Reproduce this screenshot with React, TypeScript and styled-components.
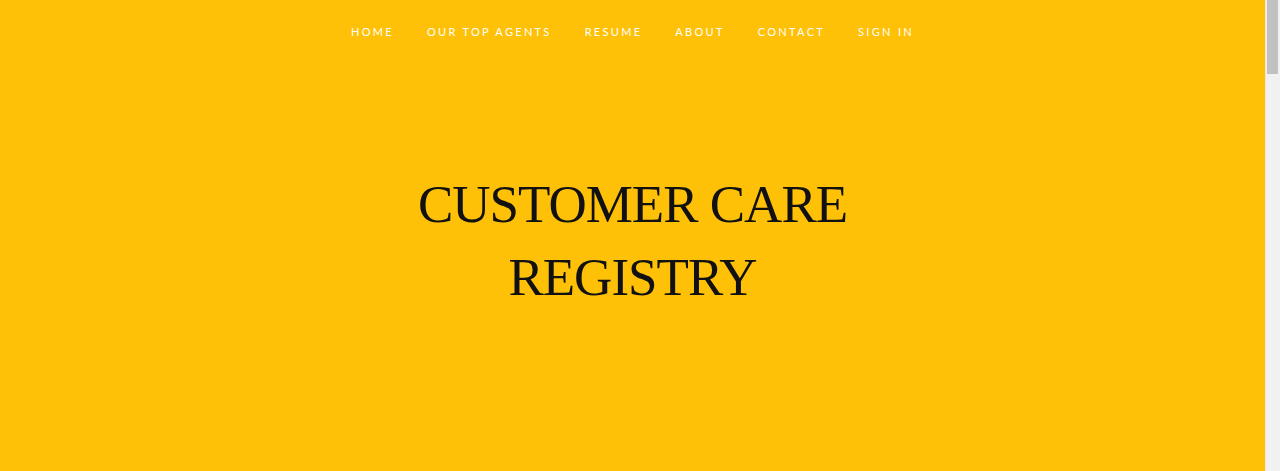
import React from "react";
import styled, { createGlobalStyle } from "styled-components";

const Global = createGlobalStyle`
  html, body { margin: 0; padding: 0; }
  body { background: #ffc107; overflow: hidden; }
`;

const Frame = styled.div`
  display: flex;
  height: 100vh;
`;

const Page = styled.div`
  flex: 1;
  background: #ffc107;
  display: flex;
  flex-direction: column;
  align-items: center;
`;

const Scrollbar = styled.div`
  width: 14px;
  background: #f1f1f1;
  border-left: 1px solid #e8e8e8;
  display: flex;
  flex-direction: column;
`;

const Thumb = styled.div`
  height: 74px;
  margin: 0 2px 0 1px;
  background: #c1c1c1;
`;

const Nav = styled.nav`
  display: flex;
  justify-content: center;
  gap: 33px;
  padding-top: 24px;
`;

const NavLink = styled.a`
  font-family: Lato, "Open Sans", sans-serif;
  font-size: 11px;
  letter-spacing: 2.3px;
  color: #ffffff;
  text-decoration: none;
  text-transform: uppercase;
  line-height: 16px;
`;

const Hero = styled.h1`
  margin: 128px 0 0;
  font-family: "Liberation Serif", "DejaVu Serif", serif;
  font-weight: 400;
  font-size: 53px;
  letter-spacing: -1px;
  line-height: 73px;
  color: #111;
  text-align: center;
  width: 460px;
`;

const links = ["Home", "Our Top Agents", "Resume", "About", "Contact", "Sign In"];

export default function App() {
  return (
    <>
      <Global />
      <Frame>
        <Page>
          <Nav>
            {links.map((l) => (
              <NavLink key={l} href="#">{l}</NavLink>
            ))}
          </Nav>
          <Hero>CUSTOMER CARE REGISTRY</Hero>
        </Page>
        <Scrollbar>
          <Thumb />
        </Scrollbar>
      </Frame>
    </>
  );
}
